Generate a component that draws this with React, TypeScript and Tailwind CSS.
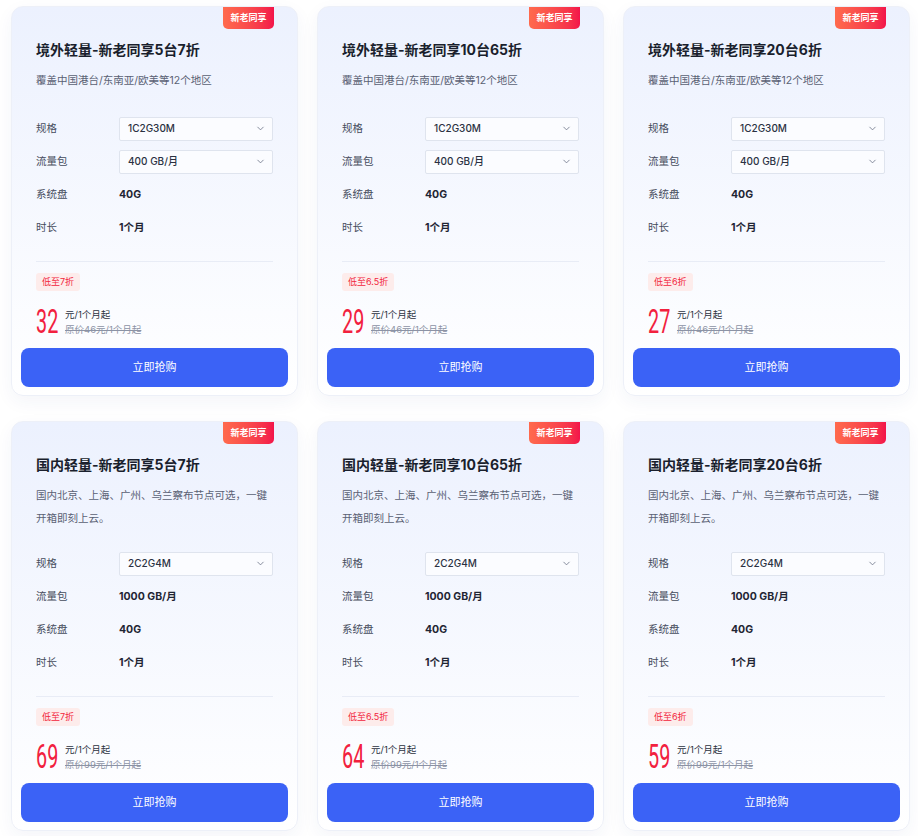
import React from "react";
import { ChevronDown } from "lucide-react";

type Plan = {
  title: string;
  desc: string;
  twoLine: boolean;
  spec: string;
  traffic: string;
  trafficSelect: boolean;
  disk: string;
  duration: string;
  discount: string;
  price: string;
  original: string;
};

const overseasDesc = "覆盖中国港台/东南亚/欧美等12个地区";
const domesticDesc = "国内北京、上海、广州、乌兰察布节点可选，一键开箱即刻上云。";

const plans: Plan[] = [
  { title: "境外轻量-新老同享5台7折", desc: overseasDesc, twoLine: false, spec: "1C2G30M", traffic: "400 GB/月", trafficSelect: true, disk: "40G", duration: "1个月", discount: "低至7折", price: "32", original: "原价46元/1个月起" },
  { title: "境外轻量-新老同享10台65折", desc: overseasDesc, twoLine: false, spec: "1C2G30M", traffic: "400 GB/月", trafficSelect: true, disk: "40G", duration: "1个月", discount: "低至6.5折", price: "29", original: "原价46元/1个月起" },
  { title: "境外轻量-新老同享20台6折", desc: overseasDesc, twoLine: false, spec: "1C2G30M", traffic: "400 GB/月", trafficSelect: true, disk: "40G", duration: "1个月", discount: "低至6折", price: "27", original: "原价46元/1个月起" },
  { title: "国内轻量-新老同享5台7折", desc: domesticDesc, twoLine: true, spec: "2C2G4M", traffic: "1000 GB/月", trafficSelect: false, disk: "40G", duration: "1个月", discount: "低至7折", price: "69", original: "原价99元/1个月起" },
  { title: "国内轻量-新老同享10台65折", desc: domesticDesc, twoLine: true, spec: "2C2G4M", traffic: "1000 GB/月", trafficSelect: false, disk: "40G", duration: "1个月", discount: "低至6.5折", price: "64", original: "原价99元/1个月起" },
  { title: "国内轻量-新老同享20台6折", desc: domesticDesc, twoLine: true, spec: "2C2G4M", traffic: "1000 GB/月", trafficSelect: false, disk: "40G", duration: "1个月", discount: "低至6折", price: "59", original: "原价99元/1个月起" },
];

function Select({ value }: { value: string }) {
  return (
    <div className="flex h-[24px] w-[154px] items-center justify-between rounded-[2px] border border-[#dfe4ee] bg-[#fbfcff] pl-[8px] pr-[6px]">
      <span className="text-[10px] font-medium text-[#2a3142]">{value}</span>
      <ChevronDown size={11} strokeWidth={1.8} className="text-[#6f7689]" />
    </div>
  );
}

function Row({ label, children }: { label: string; children: React.ReactNode }) {
  return (
    <div className="flex h-[33px] items-center">
      <div className="w-[83px] text-[10.5px] text-[#454c5c]">{label}</div>
      <div className="flex items-center">{children}</div>
    </div>
  );
}

function Value({ v }: { v: string }) {
  return <span className="text-[10.5px] font-bold text-[#1f2533]">{v}</span>;
}

function Card({ p }: { p: Plan }) {
  return (
    <div className="relative rounded-[12px] border border-[#edf0f8] bg-gradient-to-b from-[#ecf1fe] to-white px-[9px] pb-[8px] shadow-[0_6px_18px_rgba(40,60,130,0.05)]">
      <div className="absolute right-[23px] top-0 flex h-[22px] w-[51px] items-center justify-center rounded-b-[5px] bg-gradient-to-r from-[#ff6a4d] to-[#f3134a] text-[9px] font-bold text-white">
        新老同享
      </div>
      <div className="px-[15px] pt-[32px]">
        <div className="h-[22px] text-[14px] font-bold leading-[22px] text-[#1a1f2d]">{p.title}</div>
        <div className="mt-[8px] text-[10.5px] leading-[23px] text-[#5a6174]">{p.desc}</div>
        <div className={p.twoLine ? "mt-[17px]" : "mt-[20px]"}>
          <Row label="规格">
            <Select value={p.spec} />
          </Row>
          <Row label="流量包">
            {p.trafficSelect ? <Select value={p.traffic} /> : <Value v={p.traffic} />}
          </Row>
          <Row label="系统盘">
            <Value v={p.disk} />
          </Row>
          <Row label="时长">
            <Value v={p.duration} />
          </Row>
        </div>
        <div className="mt-[17px] border-t border-[#e8ecf6]" />
        <div className="mt-[11px] flex">
          <span className="flex h-[18px] items-center rounded-[3px] bg-[#fdeceb] px-[6px] text-[9px] text-[#f2253d]">
            {p.discount}
          </span>
        </div>
        <div className="mt-[14px] flex h-[33px] items-center">
          <div className="h-[33px] w-[24px] overflow-visible">
            <span className="inline-block origin-left scale-x-[0.6] text-[33px] font-normal leading-[33px] text-[#f2213e] [font-family:Roboto,'Liberation_Sans',sans-serif]">
              {p.price}
            </span>
          </div>
          <div className="ml-[5px] flex flex-col">
            <span className="text-[9.5px] leading-[15px] text-[#2c3240]">元/1个月起</span>
            <span className="text-[9.5px] leading-[15px] text-[#8c93a5] line-through">{p.original}</span>
          </div>
        </div>
      </div>
      <button className="mt-[10px] flex h-[39px] w-full items-center justify-center rounded-[8px] bg-[#3b62f6] text-[11px] text-white">
        立即抢购
      </button>
    </div>
  );
}

export default function App() {
  return (
    <div
      className="min-h-[836px] w-[918px] bg-white pl-[11px] pr-[8px] pt-[6px]"
      style={{ fontFamily: "Inter, 'Noto Sans CJK SC', sans-serif" }}
    >
      <div className="grid grid-cols-[287px_287px_287px] gap-x-[19px] gap-y-[25px]">
        {plans.map((p, i) => (
          <Card key={i} p={p} />
        ))}
      </div>
    </div>
  );
}
